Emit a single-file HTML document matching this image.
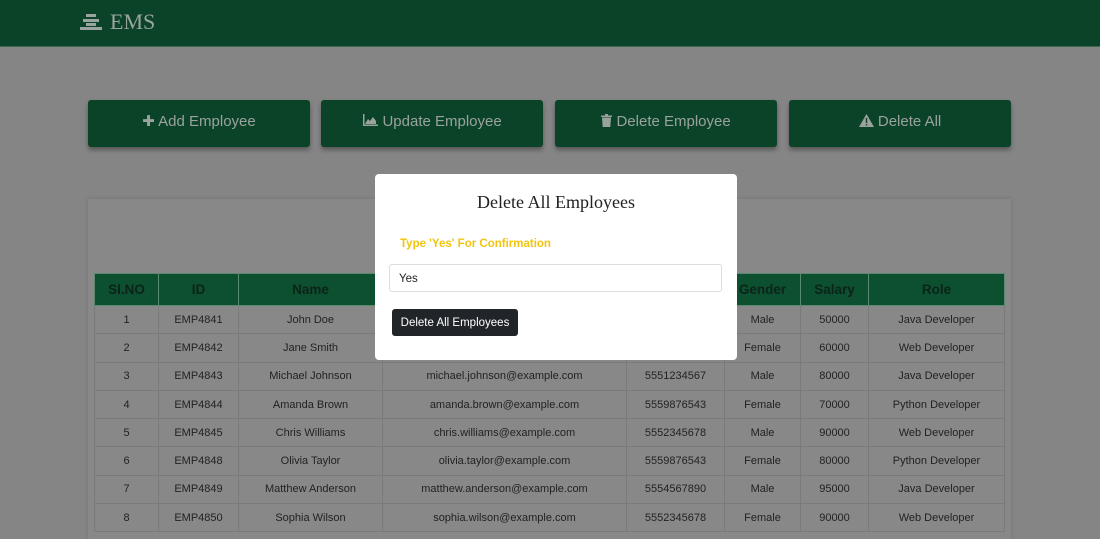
<!DOCTYPE html>
<html><head><style>
body{margin:0;width:1100px;height:535px;overflow:hidden;background:#858585;font-family:"Liberation Sans",sans-serif;position:relative}
.top{position:absolute;left:0;top:0;width:1100px;height:46px;background:#0b4329;border-bottom:1px solid #3c6a50}
.logo{position:absolute;left:80px;top:9px;color:#9aa49e;font-family:"Liberation Serif",serif;font-size:22px}
.btn{position:absolute;top:100px;width:222px;height:47px;background:#0b4329;border-radius:3px;box-shadow:0 3px 5px rgba(0,0,0,.35);color:#9aa29d;font-size:15px;text-align:center;line-height:44px}
.card{position:absolute;left:88px;top:199px;width:923px;height:340px;background:#888;box-shadow:0 0 4px rgba(0,0,0,.15)}
table{position:absolute;left:94px;top:273px;width:910px;table-layout:fixed;border-collapse:collapse;font-size:11px;color:#222}
th{background:#0c5030;color:#0b2417;height:31px;font-size:13.5px;border:1px solid #5a8a70;padding:0}
td{height:27.3px;text-align:center;border:1px solid #7a7a7a;padding:0;white-space:nowrap}
.modal{position:absolute;left:375px;top:174px;width:362px;height:186px;background:#fff;border-radius:4px}
</style></head><body>
<div class="top"><div class="logo"><svg width="22" height="18" viewBox="0 0 22 18" style="vertical-align:-2px;margin-right:8px"><rect x="6" y="1" width="10" height="3" fill="#9aa49e"/><rect x="3" y="6" width="16" height="3" fill="#9aa49e"/><rect x="6" y="10" width="10" height="3" fill="#9aa49e"/><rect x="0" y="14" width="22" height="3" fill="#9aa49e"/></svg>EMS</div></div>
<div class="btn" style="left:88px">✚ Add Employee</div>
<div class="btn" style="left:321px"><svg width="16" height="13" viewBox="0 0 16 13" style="vertical-align:-1px"><path d="M1 0V12H16V10.5H2.5V0Z M3 10L6 5L8 7L11 3L14 7V10Z" fill="#9aa29d"/></svg> Update Employee</div>
<div class="btn" style="left:555px"><svg width="11" height="13" viewBox="0 0 11 13" style="vertical-align:-1px"><path d="M0 1.5H11V3H0Z M4 0H7V1.5H4Z M1 3.5H10L9.3 13H1.7Z" fill="#9aa29d"/></svg> Delete Employee</div>
<div class="btn" style="left:789px"><svg width="15" height="13" viewBox="0 0 15 13" style="vertical-align:-1px"><path d="M7.5 0L15 13H0Z" fill="#9aa29d"/><rect x="6.8" y="4" width="1.4" height="5" fill="#0b4329"/><rect x="6.8" y="10" width="1.4" height="1.5" fill="#0b4329"/></svg> Delete All</div>
<div class="card"></div>
<table>
<colgroup><col style="width:64px"><col style="width:80px"><col style="width:144px"><col style="width:244px"><col style="width:98px"><col style="width:76px"><col style="width:68px"><col style="width:136px"></colgroup>
<tr><th>SI.NO</th><th>ID</th><th>Name</th><th>Email</th><th>Phone</th><th>Gender</th><th>Salary</th><th>Role</th></tr>
<tr><td>1</td><td>EMP4841</td><td>John Doe</td><td>john.doe@example.com</td><td>5551234567</td><td>Male</td><td>50000</td><td>Java Developer</td></tr>
<tr><td>2</td><td>EMP4842</td><td>Jane Smith</td><td>jane.smith@example.com</td><td>5559876543</td><td>Female</td><td>60000</td><td>Web Developer</td></tr>
<tr><td>3</td><td>EMP4843</td><td>Michael Johnson</td><td>michael.johnson@example.com</td><td>5551234567</td><td>Male</td><td>80000</td><td>Java Developer</td></tr>
<tr><td>4</td><td>EMP4844</td><td>Amanda Brown</td><td>amanda.brown@example.com</td><td>5559876543</td><td>Female</td><td>70000</td><td>Python Developer</td></tr>
<tr><td>5</td><td>EMP4845</td><td>Chris Williams</td><td>chris.williams@example.com</td><td>5552345678</td><td>Male</td><td>90000</td><td>Web Developer</td></tr>
<tr><td>6</td><td>EMP4848</td><td>Olivia Taylor</td><td>olivia.taylor@example.com</td><td>5559876543</td><td>Female</td><td>80000</td><td>Python Developer</td></tr>
<tr><td>7</td><td>EMP4849</td><td>Matthew Anderson</td><td>matthew.anderson@example.com</td><td>5554567890</td><td>Male</td><td>95000</td><td>Java Developer</td></tr>
<tr><td>8</td><td>EMP4850</td><td>Sophia Wilson</td><td>sophia.wilson@example.com</td><td>5552345678</td><td>Female</td><td>90000</td><td>Web Developer</td></tr>
</table>
<div class="modal">
<div style="position:absolute;left:0;width:362px;top:18px;text-align:center;font-family:'Liberation Serif',serif;font-size:18px;color:#222">Delete All Employees</div>
<div style="position:absolute;left:25px;top:64px;font-size:11.5px;font-weight:bold;color:#f2c40f">Type 'Yes' For Confirmation</div>
<div style="position:absolute;left:14px;top:90px;height:28px;border:1px solid #ddd;border-radius:3px;font-size:11.5px;line-height:28px;padding-left:9px;box-sizing:border-box;width:333px;color:#222">Yes</div>
<div style="position:absolute;left:17px;top:135px;width:126px;height:27px;background:#212529;border-radius:3px;color:#fff;font-size:11.5px;line-height:29px;text-align:center">Delete All Employees</div>
</div>
</body></html>
